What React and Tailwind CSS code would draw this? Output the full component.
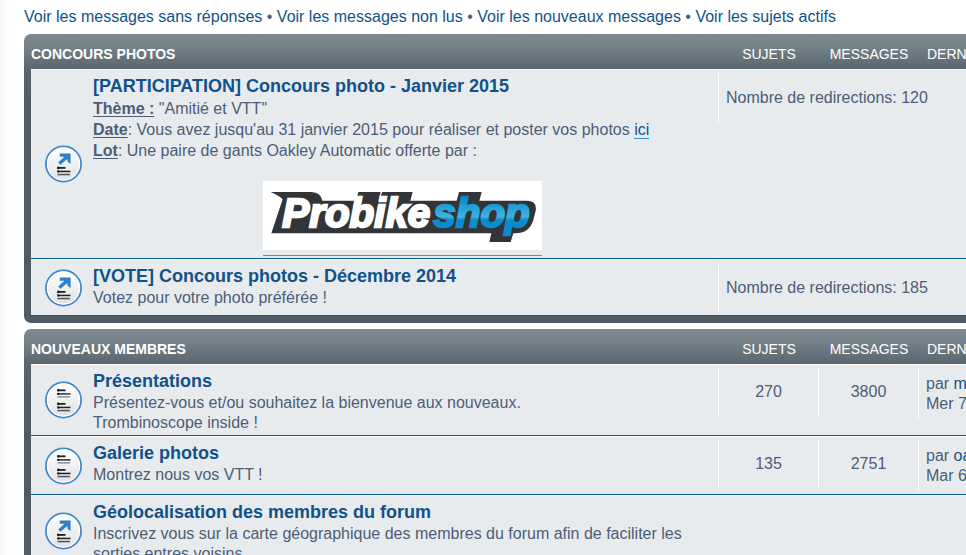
const navLinks = [
  'Voir les messages sans réponses',
  'Voir les messages non lus',
  'Voir les nouveaux messages',
  'Voir les sujets actifs',
];

function ForumIcon({ redirect }) {
  return (
    <svg className="block" width="38" height="38" viewBox="0 0 38 38" aria-hidden="true">
      <defs>
        <linearGradient id="disc" x1="0" y1="0" x2="0" y2="1">
          <stop offset="0" stopColor="#ffffff" />
          <stop offset="1" stopColor="#dfe1e4" />
        </linearGradient>
      </defs>
      <circle cx="18.5" cy="19" r="17.6" fill="url(#disc)" stroke="#4189c8" strokeWidth="1.8" />
      <circle cx="18.5" cy="19" r="16" fill="none" stroke="#ffffff" strokeWidth="1.2" />
      {redirect ? (
        <path d="M14.8 8.5H25.6V19L22.4 16.4V14L15.4 19.8 13.2 17.4 19.4 11.8H14.8z" fill="#2f80c6" />
      ) : (
        <g fill="#222">
          <rect x="12.5" y="8.4" width="8" height="1.8" />
          <rect x="12.5" y="12.2" width="13" height="1.4" />
          <rect x="12.5" y="15.3" width="12.5" height="1.2" fill="#777" />
          <circle cx="13.3" cy="9.3" r="1.3" />
          <circle cx="13.3" cy="12.9" r="1.2" />
        </g>
      )}
      <g fill="#222">
        <rect x="12.5" y="22" width="8" height="1.8" />
        <rect x="12.5" y="25.7" width="13" height="1.5" />
        <rect x="12.5" y="28.8" width="12.5" height="1.5" fill="#555" />
        <circle cx="13.3" cy="22.9" r="1.3" />
        <circle cx="13.3" cy="26.4" r="1.2" />
      </g>
    </svg>
  );
}

function ProbikeshopLogo() {
  return (
    <svg className="block bg-white" width="279" height="69" viewBox="39 33 837 207" role="img" aria-label="Probikeshop">
      <defs>
        <linearGradient id="shop" gradientUnits="userSpaceOnUse" x1="0" y1="80" x2="0" y2="205">
          <stop offset="0" stopColor="#0a86c6" />
          <stop offset="0.2" stopColor="#1c9bd3" />
          <stop offset="0.48" stopColor="#3fb4e2" />
          <stop offset="0.56" stopColor="#0b8bcb" />
          <stop offset="1" stopColor="#0b8bcb" />
        </linearGradient>
      </defs>
      <path
        d="M62 66H184Q212 67 217 92H318L325 66H392L385 92L397 66H488L481 92H620L627 66H695L688 92H830Q862 92 857 122L850 150Q838 190 796 190H790L782 216H718L724 190H64L98 88Q86 76 62 66Z"
        fill="#333438"
      />
      <g
        fontFamily="'Liberation Sans', Arial, sans-serif"
        fontSize="121"
        fontWeight="bold"
        fontStyle="italic"
        strokeWidth="7"
      >
        <text x="97" y="171" fill="#fff" stroke="#fff">Probike</text>
        <text x="550" y="171" fill="url(#shop)" stroke="url(#shop)">shop</text>
      </g>
    </svg>
  );
}

const categories = [
  {
    name: 'Concours photos',
    forums: [
      {
        title: '[PARTICIPATION] Concours photo - Janvier 2015',
        redirections: 120,
        description: (
          <div className="leading-[21px]">
            <p><b className="underline underline-offset-2">Thème :</b> "Amitié et VTT"</p>
            <p>
              <b className="underline underline-offset-2">Date</b>: Vous avez jusqu'au 31 janvier 2015 pour réaliser et poster vos photos{' '}
              <a href="#" className="border-b border-[#368ad2] text-[#105289]">ici</a>
            </p>
            <p><b className="underline underline-offset-2">Lot</b>: Une paire de gants Oakley Automatic offerte par :</p>
            <a href="#" className="mx-auto mt-5 block w-fit border-b border-[#5c8fbd] pb-[5px]">
              <ProbikeshopLogo />
            </a>
          </div>
        ),
      },
      {
        title: '[VOTE] Concours photos - Décembre 2014',
        redirections: 185,
        description: 'Votez pour votre photo préférée !',
      },
    ],
  },
  {
    name: 'Nouveaux membres',
    forums: [
      {
        title: 'Présentations',
        description: (
          <>
            Présentez-vous et/ou souhaitez la bienvenue aux nouveaux.
            <br />
            Trombinoscope inside !
          </>
        ),
        topics: 270,
        posts: 3800,
        last: { author: 'm', date: 'Mer 7' },
      },
      {
        title: 'Galerie photos',
        description: 'Montrez nous vos VTT !',
        topics: 135,
        posts: 2751,
        last: { author: 'oa', date: 'Mar 6' },
      },
      {
        title: 'Géolocalisation des membres du forum',
        description:
          'Inscrivez vous sur la carte géographique des membres du forum afin de faciliter les sorties entres voisins.',
        link: true,
      },
    ],
  },
];

function ForumRow({ forum }) {
  const { title, description, redirections, topics, posts, last, link } = forum;
  const redirect = redirections !== undefined || link;

  return (
    <tr className="bg-[#e8ebee] align-top [&>td]:border-t [&>td]:border-b [&>td]:border-t-white [&>td]:border-b-[#00608f]">
      <td className="pl-3.5 align-middle">
        <ForumIcon redirect={redirect} />
      </td>
      <td className="pt-1 pr-1.5 pb-0.5">
        <h3 className="text-[18px] leading-6 font-bold">
          <a href="#" className="text-[#105289]">{title}</a>
        </h3>
        <div className="leading-5">{description}</div>
      </td>
      {redirections !== undefined && (
        <td colSpan={3} className="pt-[3px] pb-0.5">
          <div className="flex h-[50px] items-center border-l border-white pl-[7px]">
            Nombre de redirections: {redirections}
          </div>
        </td>
      )}
      {link && <td colSpan={3} />}
      {last && (
        <>
          <td className="pt-[3px]">
            <div className="flex h-12 items-center justify-center border-l border-white">{topics}</div>
          </td>
          <td className="pt-[3px]">
            <div className="flex h-12 items-center justify-center border-l border-white">{posts}</div>
          </td>
          <td className="pt-[3px] pb-1">
            <div className="h-[50px] border-l border-white pt-1.5 pl-[7px] leading-5">
              par <a href="#" className="text-[#105289]">{last.author}</a>
              <br />
              {last.date}
            </div>
          </td>
        </>
      )}
    </tr>
  );
}

function Category({ category }) {
  return (
    <section className="rounded-[7px] bg-[#4f5b65] bg-[linear-gradient(#7d8a92,#75828a_12px,#5a666f_35px,#4f5b65_70px)] px-[7px] pb-[7px]">
      <table className="w-full table-fixed border-separate border-spacing-0 text-left">
        <colgroup>
          <col className="w-[62px]" />
          <col />
          <col className="w-[100px]" />
          <col className="w-[100px]" />
          <col className="w-[251px]" />
        </colgroup>
        <thead>
          <tr className="h-[35px] text-sm text-white uppercase">
            <th colSpan={2} className="pt-1 font-bold">{category.name}</th>
            <th className="pt-1 pl-0.5 text-center font-normal">Sujets</th>
            <th className="pt-1 pl-0.5 text-center font-normal">Messages</th>
            <th className="pt-1 pl-[9px] font-normal">Dernier message</th>
          </tr>
        </thead>
        <tbody>
          {category.forums.map((forum) => (
            <ForumRow key={forum.title} forum={forum} />
          ))}
        </tbody>
      </table>
    </section>
  );
}

export default function App() {
  return (
    <div className="h-screen overflow-hidden bg-[linear-gradient(to_right,#f5f5f5,#ffffff_10px)] font-['Liberation_Sans',Arial,sans-serif] text-base text-[#4c5d77]">
      <div className="min-w-[1200px] px-6">
        <nav className="flex h-[34px] items-center">
          <p>
            {navLinks.map((label, i) => (
              <span key={label}>
                {i > 0 && ' • '}
                <a href="#" className="text-[#105289]">{label}</a>
              </span>
            ))}
          </p>
        </nav>
        <main className="flex flex-col gap-1.5">
          {categories.map((category) => (
            <Category key={category.name} category={category} />
          ))}
        </main>
      </div>
    </div>
  );
}
